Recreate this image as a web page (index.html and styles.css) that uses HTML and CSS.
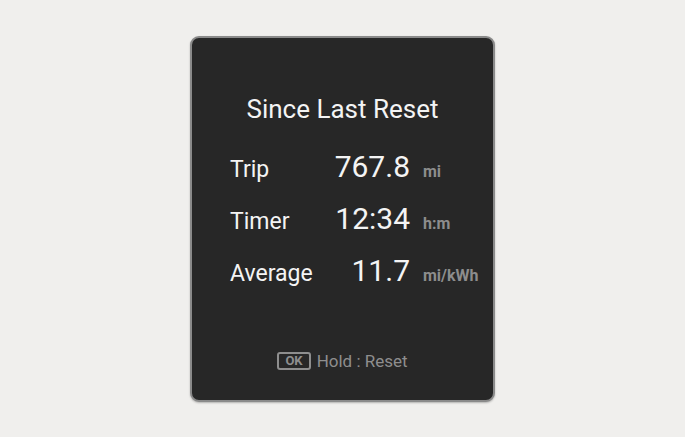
FILE: index.html
```html
<!DOCTYPE html>
<html lang="en">
<head>
  <meta charset="UTF-8">
  <title>Since Last Reset</title>
  <link rel="stylesheet" href="styles.css">
</head>
<body>

  <div class="painel">
    <h2 class="titulo">Since Last Reset</h2>

    <div class="linhas">
      <span class="rotulo">Trip</span>
      <span class="valor">767.8</span>
      <span class="unidade">mi</span>

      <span class="rotulo">Timer</span>
      <span class="valor">12:34</span>
      <span class="unidade">h:m</span>

      <span class="rotulo">Average</span>
      <span class="valor">11.7</span>
      <span class="unidade">mi/kWh</span>
    </div>

    <div class="rodape">
      <span class="tecla">OK</span>
      <span>Hold : Reset</span>
    </div>
  </div>

</body>
</html>
```

FILE: styles.css
```css
body {
  margin: 0;
  height: 437px;
  background: #f0efed;
  font-family: Roboto, 'Noto Sans', sans-serif;
  display: flex;
  align-items: center;
  justify-content: center;
}
.painel {
  box-sizing: border-box;
  width: 305px;
  height: 366px;
  background: #272727;
  border: 2px solid #8a8a8a;
  border-radius: 9px;
  box-shadow: 0 1px 2px rgba(0, 0, 0, 0.25);
  display: flex;
  flex-direction: column;
  color: #f4f4f4;
}
.titulo {
  margin: 55px 0 0;
  font-size: 26px;
  font-weight: normal;
  text-align: center;
  line-height: 32px;
}
.linhas {
  margin-top: 25px;
  padding-left: 38px;
  display: grid;
  grid-template-columns: 88px 79px auto;
  column-gap: 13px;
  row-gap: 15px;
  align-items: baseline;
}
.rotulo {
  font-size: 23px;
  line-height: 34px;
}
.valor {
  font-size: 30px;
  line-height: 34px;
  text-align: right;
}
.unidade {
  font-size: 16px;
  font-weight: bold;
  color: #8d8d8d;
}
.rodape {
  margin-top: auto;
  margin-bottom: 29px;
  display: flex;
  justify-content: center;
  align-items: center;
  gap: 6px;
  font-size: 17px;
  color: #8e8e8e;
}
.tecla {
  border: 2px solid #8e8e8e;
  border-radius: 3px;
  font-size: 13px;
  font-weight: bold;
  padding: 0 6px;
  line-height: 14px;
}
```
